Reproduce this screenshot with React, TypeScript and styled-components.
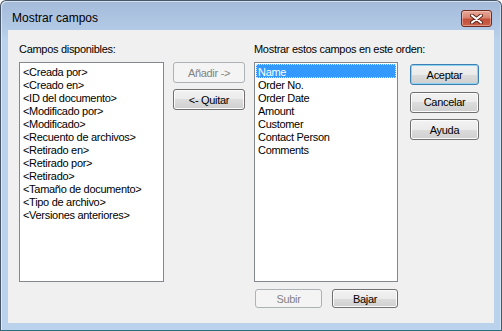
import React from "react";
import styled, { createGlobalStyle } from "styled-components";

const GlobalStyle = createGlobalStyle`
    html, body {
        margin: 0;
        padding: 0;
        background: #ffffff;
    }
`;

const available = [
    "<Creada por>",
    "<Creado en>",
    "<ID del documento>",
    "<Modificado por>",
    "<Modificado>",
    "<Recuento de archivos>",
    "<Retirado en>",
    "<Retirado por>",
    "<Retirado>",
    "<Tamaño de documento>",
    "<Tipo de archivo>",
    "<Versiones anteriores>",
];

const shown = ["Name", "Order No.", "Order Date", "Amount", "Customer", "Contact Person", "Comments"];

/**
 * Diálogo "Mostrar campos"
 */
const App = () => {
    return (
        <>
            <GlobalStyle />
            <Window>
                <TitleBar>
                    <Title>Mostrar campos</Title>
                    <CloseButton aria-label="Cerrar">
                        <svg width="13" height="10" viewBox="0 0 13 10">
                            <path d="M2 1.5 L11 8.5 M11 1.5 L2 8.5" stroke="#5a2418" strokeWidth="4" strokeLinecap="round" fill="none" />
                            <path d="M2 1.5 L11 8.5 M11 1.5 L2 8.5" stroke="#ffffff" strokeWidth="2.2" strokeLinecap="round" fill="none" />
                        </svg>
                    </CloseButton>
                </TitleBar>
                <Client>
                    <Label>Campos disponibles:</Label>
                    <Label $wide>Mostrar estos campos en este orden:</Label>

                    <ListBox>
                        {available.map((item) => (
                            <Item key={item}>{item}</Item>
                        ))}
                    </ListBox>
                    <ButtonColumn>
                        <Button $h={21} disabled>Añadir -&gt;</Button>
                        <Button $h={21}>&lt;- Quitar</Button>
                    </ButtonColumn>
                    <ListBox>
                        {shown.map((item, i) => (
                            <Item key={item} $selected={i === 0}>{item}</Item>
                        ))}
                    </ListBox>
                    <ButtonColumn $right>
                        <Button $h={21} $default>Aceptar</Button>
                        <Button $h={21}>Cancelar</Button>
                        <Button $h={21}>Ayuda</Button>
                    </ButtonColumn>

                    <OrderRow>
                        <Button $w={67} $h={19} disabled>Subir</Button>
                        <Button $w={66} $h={19}>Bajar</Button>
                    </OrderRow>
                </Client>
            </Window>
        </>
    );
};

const Window = styled.div`
    box-sizing: border-box;
    width: 502px;
    height: 331px;
    display: flex;
    flex-direction: column;
    border: 1px solid #48566a;
    border-bottom-color: #2a6f7e;
    border-radius: 6px 6px 0 0;
    background: linear-gradient(#a3bbd9 0px, #b3cae6 28px, #bad2ec 40px, #bad2ec 100%);
    box-shadow: inset 1px 1px 0 rgba(255, 255, 255, 0.55), inset -1px 0 0 rgba(255, 255, 255, 0.4);
    font-family: "Liberation Sans", Arial, sans-serif;
`;

const TitleBar = styled.div`
    box-sizing: border-box;
    height: 29px;
    display: flex;
    align-items: flex-start;
    justify-content: space-between;
    padding: 9px 9px 0 11px;
`;

const Title = styled.span`
    font-size: 12px;
    line-height: 17px;
    color: #000;
`;

const CloseButton = styled.button`
    box-sizing: border-box;
    width: 31px;
    height: 17px;
    padding: 0;
    display: flex;
    align-items: center;
    justify-content: center;
    border: 1px solid #6e2b1f;
    border-radius: 3px;
    background: linear-gradient(#e8a898 0%, #d98572 45%, #c4503a 55%, #c9614a 100%);
    box-shadow: inset 0 0 0 1px rgba(255, 220, 210, 0.45);
`;

const Client = styled.div`
    box-sizing: border-box;
    flex: 1;
    margin: 0 7px 7px 7px;
    padding: 13px 12px 0 11px;
    background: #f0f0f0;
    display: grid;
    grid-template-columns: 145px 72px 144px 72px;
    grid-template-rows: 19px 220px auto;
    column-gap: 9px;
    align-items: start;
    font-size: 11px;
    letter-spacing: -0.3px;
    color: #000;
`;

const Label = styled.div<{ $wide?: boolean }>`
    line-height: 13px;
    white-space: nowrap;
    grid-column: ${(p) => (p.$wide ? "3 / 5" : "1 / 3")};
`;

const ListBox = styled.div`
    box-sizing: border-box;
    height: 220px;
    border: 1px solid #828790;
    background: #fff;
    padding: 1px;
    display: flex;
    flex-direction: column;
`;

const Item = styled.div<{ $selected?: boolean }>`
    box-sizing: border-box;
    height: 13px;
    line-height: 14px;
    padding-left: 2px;
    white-space: nowrap;
    background: ${(p) => (p.$selected ? "#3399ff" : "transparent")};
    color: ${(p) => (p.$selected ? "#fff" : "#000")};
    outline: ${(p) => (p.$selected ? "1px dotted #cfe6ff" : "none")};
    outline-offset: -1px;
    &:first-child {
        height: 14px;
        line-height: 16px;
    }
`;

const ButtonColumn = styled.div<{ $right?: boolean }>`
    display: flex;
    flex-direction: column;
    gap: ${(p) => (p.$right ? "6.5px" : "6px")};
    margin-top: ${(p) => (p.$right ? "2px" : "0")};
    margin-left: ${(p) => (p.$right ? "3px" : "0")};
`;

const OrderRow = styled.div`
    grid-column: 3;
    margin-top: 7px;
    padding-left: 1px;
    display: flex;
    justify-content: space-between;
`;

const Button = styled.button<{ $w?: number; $h: number; $default?: boolean }>`
    box-sizing: border-box;
    width: ${(p) => (p.$w ? `${p.$w}px` : "100%")};
    height: ${(p) => p.$h}px;
    padding: 0;
    font-family: "Liberation Sans", Arial, sans-serif;
    font-size: 11px;
    letter-spacing: -0.3px;
    color: #000;
    border: 1px solid ${(p) => (p.$default ? "#3c7fb1" : "#707070")};
    border-radius: 3px;
    background: linear-gradient(#f2f2f2 0%, #ebebeb 50%, #dddddd 50%, #cfcfcf 100%);
    box-shadow: inset 0 0 0 1px ${(p) => (p.$default ? "#8fd3f3" : "#fbfbfb")};
    &:disabled {
        border-color: #adb2b5;
        background: #f4f4f4;
        color: #838383;
        box-shadow: none;
    }
`;

export default App;
